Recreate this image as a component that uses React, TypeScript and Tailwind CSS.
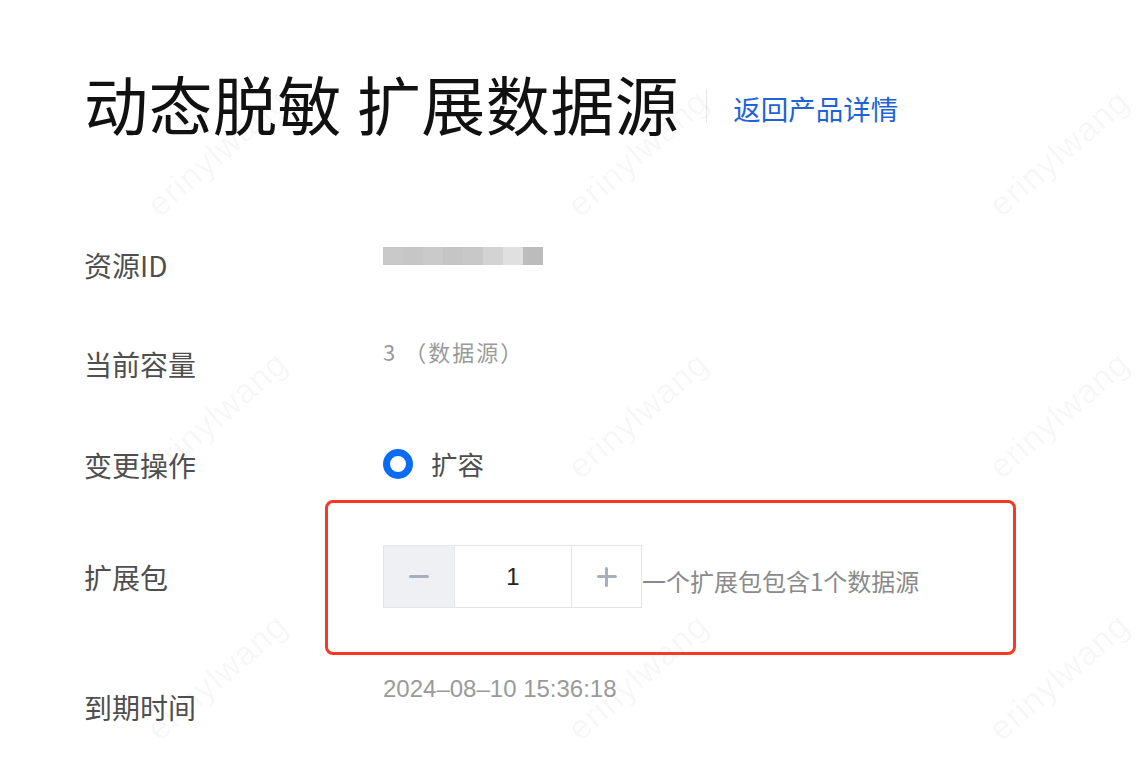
import React from 'react'

const cjk = "font-['Noto_Sans_CJK_SC','Noto_Sans',sans-serif]"

const marks = [0, 1, 2].flatMap((r) =>
  [0, 1, 2].map((c) => ({ key: `${r}-${c}`, left: 152 + c * 421, top: 184 + r * 262 }))
)

const blur = ['#c9c9c9', '#c6c6c6', '#cacaca', '#c5c5c5', '#c8c8c8', '#d3d3d3', '#e0e0e0', '#bcbcbc']

function Watermarks() {
  return (
    <div className="pointer-events-none absolute inset-0 overflow-hidden">
      {marks.map((m) => (
        <span
          key={m.key}
          className="absolute origin-left -rotate-[41deg] font-['Liberation_Sans',sans-serif] text-[34px] tracking-[1px] text-[rgba(0,0,0,0.045)]"
          style={{ left: m.left, top: m.top }}
        >
          erinylwang
        </span>
      ))}
    </div>
  )
}

function Label({ text, mt }: { text: string; mt: string }) {
  return <div className={`w-[299px] shrink-0 text-[28px] leading-none text-[#4f4f4f] ${mt}`}>{text}</div>
}

export default function App() {
  return (
    <main className={`relative min-h-[782px] w-[1136px] overflow-hidden bg-white ${cjk}`}>
      <div className="flex flex-col pl-[84px] pt-[70px]">
        <div className="flex items-center">
          <h1 className="text-[64px] leading-none font-normal tracking-[0.5px] text-[#111]">动态脱敏 扩展数据源</h1>
          <span className="mt-[8px] ml-[27px] h-[34px] w-px bg-[#e8e8e8]" />
          <a className="mt-[14px] ml-[26px] text-[27.5px] leading-none text-[#1f63d8]">返回产品详情</a>
        </div>

        <div className="mt-[106px] flex h-[95px] items-start">
          <Label text="资源ID" mt="mt-[11px]" />
          <div className="mt-[7px] flex h-[18px]">
            {blur.map((c, i) => (
              <div key={i} className="h-full w-[20px]" style={{ background: c }} />
            ))}
          </div>
        </div>

        <div className="flex h-[105px] items-start">
          <Label text="当前容量" mt="mt-[15px]" />
          <div className="mt-[5px] text-[22px] leading-none tracking-[2px] text-[#9a9a9a]">3 （数据源）</div>
        </div>

        <div className="flex h-[105px] items-start">
          <Label text="变更操作" mt="mt-[11px]" />
          <div className="mt-[9px] flex items-center gap-[18px]">
            <span className="box-border h-[30px] w-[30px] rounded-full border-[7px] border-[#0a6cf5] bg-white" />
            <span className="text-[26.5px] leading-none text-[#4f4f4f]">扩容</span>
          </div>
        </div>

        <div className="flex h-[130px] items-start">
          <Label text="扩展包" mt="mt-[18px]" />
          <div className="flex items-center">
            <div className="flex h-[63px] border border-[#e3e5ea]">
              <button className="flex w-[70px] items-center justify-center bg-[#eff0f4]">
                <span className="h-[3px] w-[20px] rounded bg-[#a7afbf]" />
              </button>
              <div className="flex w-[118px] items-center justify-center border-x border-[#e3e5ea] bg-white font-['Liberation_Sans',sans-serif] text-[24px] text-[#222]">
                1
              </div>
              <button className="relative flex w-[69px] items-center justify-center bg-white">
                <span className="h-[3px] w-[20px] rounded bg-[#a7afbf]" />
                <span className="absolute h-[20px] w-[3px] rounded bg-[#a7afbf]" />
              </button>
            </div>
            <span className="mt-[8px] text-[24px] leading-none text-[#8a8a8a]">一个扩展包包含1个数据源</span>
          </div>
        </div>

        <div className="flex h-[100px] items-start">
          <Label text="到期时间" mt="mt-[18px]" />
          <div className="mt-[2px] font-['Liberation_Sans',sans-serif] text-[24px] leading-none text-[#9a9a9a]">
            2024–08–10 15:36:18
          </div>
        </div>
      </div>

      <Watermarks />
      <div className="pointer-events-none absolute top-[500px] left-[325px] h-[155px] w-[691px] rounded-[8px] border-[3px] border-[#f43a22]" />
    </main>
  )
}
